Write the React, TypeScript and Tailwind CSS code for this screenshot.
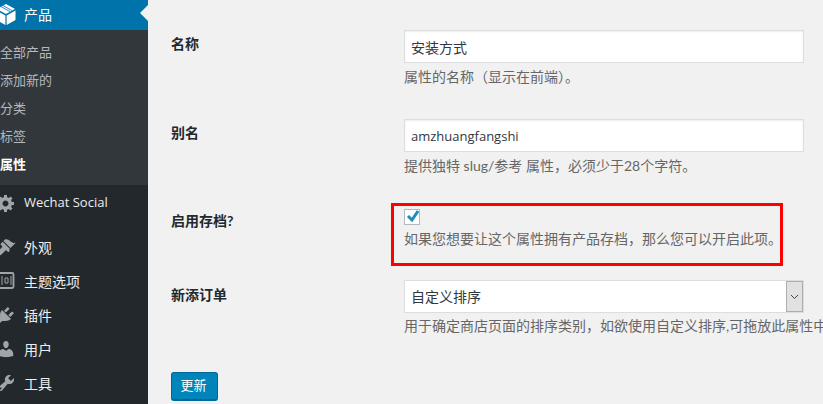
import React from 'react';

const iconClass = 'w-[20px] h-[20px] fill-[#a0a5aa]';

const CubeIcon = () => (
  <svg width="20" height="22" viewBox="0 0 20 22" className="fill-white">
    <path d="M10 1 L19 6 L10 11 L1 6 Z" />
    <path d="M5 3.6 L14 8.6 M7 2.6 L16 7.6" stroke="#0073aa" strokeWidth="0.8" fill="none" />
    <path d="M0.5 7.5 L9.4 12.5 L9.4 22 L0.5 17 Z" />
    <path d="M19.5 7.5 L10.6 12.5 L10.6 22 L19.5 17 Z" />
  </svg>
);

const GearIcon = () => (
  <svg viewBox="0 0 20 20" className={iconClass}>
    <path d="M18 12h-2.18c-.17.7-.44 1.35-.81 1.93l1.54 1.54-2.1 2.1-1.54-1.54c-.58.36-1.23.63-1.91.79V19H8v-2.18c-.68-.16-1.33-.43-1.91-.79l-1.54 1.54-2.12-2.12 1.54-1.54c-.36-.58-.63-1.23-.79-1.91H1V9.03h2.17c.16-.7.44-1.35.8-1.94L2.43 5.55l2.1-2.1 1.54 1.54c.58-.37 1.24-.64 1.93-.81V2h3v2.18c.68.16 1.33.43 1.91.79l1.54-1.54 2.12 2.12-1.54 1.54c.36.59.64 1.24.8 1.94H18V12zm-8.5 1.5c1.66 0 3-1.34 3-3s-1.34-3-3-3-3 1.34-3 3 1.34 3 3 3z" />
  </svg>
);

const BrushIcon = () => (
  <svg viewBox="0 0 20 20" className={iconClass}>
    <path d="M14.48 11.06L7.41 3.99l1.5-1.5c.5-.56 2.3-.47 3.51.32 1.21.8 1.43 1.28 2.91 2.1 1.18.64 2.45 1.26 4.45.85zm-.71.71L6.7 4.7 4.93 6.47c-.39.39-.39 1.02 0 1.41l1.06 1.06c.39.39.39 1.03 0 1.42-.6.6-2.85 2.88-3.85 3.88-.9.9-.9 2.34 0 3.24.9.9 2.34.9 3.24 0 1-1 3.28-3.25 3.88-3.85.39-.39 1.03-.39 1.42 0l1.06 1.06c.39.39 1.02.39 1.41 0z" />
  </svg>
);

const PluginIcon = () => (
  <svg viewBox="0 0 20 20" className={iconClass}>
    <path d="M13.11 4.36L9.87 7.6 8 5.73l3.24-3.24c.35-.34 1.05-.2 1.56.32.52.51.66 1.21.31 1.55zm-8 1.77l.91-1.12 9.01 9.01-1.19.84c-.71.71-2.63 1.16-3.82 1.16H6.14L4.9 17.26c-.59.59-1.54.59-2.12 0-.59-.58-.59-1.53 0-2.12l1.24-1.24v-3.88c0-1.13.4-3.19 1.09-3.89zm7.26 3.97l3.24-3.24c.34-.35 1.04-.21 1.55.31.52.51.66 1.21.31 1.55l-3.24 3.25z" />
  </svg>
);

const UserIcon = () => (
  <svg viewBox="0 0 20 20" className={iconClass}>
    <path d="M10 9.25c-2.27 0-2.73-3.44-2.73-3.44C7 4.02 7.82 2 9.97 2c2.16 0 2.98 2.02 2.71 3.81 0 0-.41 3.44-2.68 3.44zm0 2.57L12.72 10c2.39 0 4.52 2.33 4.52 4.53v2.49s-3.65 1.13-7.24 1.13c-3.65 0-7.24-1.13-7.24-1.13v-2.49c0-2.25 1.94-4.48 4.47-4.48z" />
  </svg>
);

const ToolsIcon = () => (
  <svg viewBox="0 0 20 20" className={iconClass}>
    <path d="M16.68 9.77c-1.34 1.34-3.3 1.67-4.95.99l-5.41 6.52c-.99.99-2.59.99-3.58 0s-.99-2.59 0-3.57l6.52-5.42c-.68-1.65-.35-3.61.99-4.95 1.28-1.28 3.12-1.62 4.72-1.06l-2.89 2.89 2.82 2.82 2.86-2.87c.53 1.58.18 3.39-1.08 4.67zM3.81 16.21c.4.39 1.04.39 1.43 0 .4-.4.4-1.04 0-1.43-.39-.4-1.03-.4-1.43 0-.39.39-.39 1.03 0 1.43z" />
  </svg>
);

const ThemeIcon = () => (
  <svg viewBox="0 0 20 20" className="w-[20px] h-[20px]" fill="none" stroke="#a0a5aa">
    <rect x="1.5" y="2" width="16" height="15" rx="1.5" strokeWidth="1.8" />
    <path d="M6 5 V14 M9 7 H12 V12 H9 Z M15 5 V14" strokeWidth="1" />
  </svg>
);

const subItems = ['全部产品', '添加新的', '分类', '标签'];

const menuItems = [
  { label: '外观', icon: <BrushIcon /> },
  { label: '主题选项', icon: <ThemeIcon /> },
  { label: '插件', icon: <PluginIcon /> },
  { label: '用户', icon: <UserIcon /> },
  { label: '工具', icon: <ToolsIcon /> },
];

const Sidebar = () => (
  <aside className="w-[148px] shrink-0 bg-[#23282d] text-[14px] text-[#eeeeee] overflow-hidden">
    <div className="relative flex items-center h-[30px] pb-[2px] bg-[#0073aa] text-white">
      <span className="w-[20px] -ml-[4px] mr-[8px] flex justify-center"><CubeIcon /></span>
      <span>产品</span>
      <span className="absolute right-0 top-[5px] border-y-[8px] border-r-[8px] border-y-transparent border-r-[#f1f1f1]" />
    </div>
    <ul className="bg-[#32373c] h-[155px] pt-[10px] text-[13px]">
      {subItems.map((item) => (
        <li key={item} className="h-[28px] leading-[24px] text-[#b4b9be]">{item}</li>
      ))}
      <li className="h-[28px] leading-[24px] font-bold text-white">属性</li>
    </ul>
    <div className="flex items-center h-[35px]">
      <span className="w-[20px] -ml-[4px] mr-[8px] flex justify-center"><GearIcon /></span>
      <span className="font-['Open_Sans'] text-[13px]">Wechat Social</span>
    </div>
    <div className="pt-[10px]">
      {menuItems.map((m) => (
        <div key={m.label} className="flex items-center h-[34px]">
          <span className="w-[20px] -ml-[4px] mr-[8px] flex justify-center">{m.icon}</span>
          <span>{m.label}</span>
        </div>
      ))}
    </div>
  </aside>
);

const Row = ({ label, h, children }: { label: string; h: string; children: React.ReactNode }) => (
  <div className={`flex ${h}`}>
    <label className="w-[256px] shrink-0 pl-[23px] font-bold text-[14px] leading-[20px] text-[#23282d] pt-[4px]">{label}</label>
    <div className="flex-1 min-w-0">{children}</div>
  </div>
);

const Desc = ({ children }: { children: React.ReactNode }) => (
  <p className="text-[14px] leading-[20px] text-[#666666] whitespace-nowrap">{children}</p>
);

const inputClass = 'block w-[400px] h-[33px] px-[6px] bg-white border border-[#dddddd] text-[#32373c] shadow-[inset_0_1px_2px_rgba(0,0,0,0.07)] outline-none';

export default function App() {
  return (
    <div className="relative flex w-[823px] h-[404px] overflow-hidden bg-[#f1f1f1] font-['Lato','Noto_Sans_CJK_SC',sans-serif]">
      <Sidebar />
      <main className="flex-1 min-w-0 overflow-hidden pt-[30px]">
        <Row label="名称" h="h-[89px]">
          <input className={`${inputClass} text-[14px]`} defaultValue="安装方式" />
          <div className="mt-[4px]"><Desc>属性的名称（显示在前端）。</Desc></div>
        </Row>
        <Row label="别名" h="h-[88px]">
          <input className={`${inputClass} text-[13px] font-['Open_Sans']`} defaultValue="amzhuangfangshi" />
          <div className="mt-[4px]"><Desc>提供独特 slug/参考 属性，必须少于28个字符。</Desc></div>
        </Row>
        <Row label="启用存档?" h="h-[74px]">
          <div className="h-[16px] w-[16px] relative mt-[2px] border border-[#b4b9be] bg-white mb-[4px]">
            <svg viewBox="0 0 16 16" className="absolute -top-[2px] left-0 w-[16px] h-[16px]" fill="none" stroke="#1e8cbe" strokeWidth="3">
              <path d="M3 8 L7 12 L13 3" />
            </svg>
          </div>
          <Desc>如果您想要让这个属性拥有产品存档，那么您可以开启此项。</Desc>
        </Row>
        <Row label="新添订单" h="h-[91px]">
          <div className="flex w-[400px] h-[33px] -mt-[1px] bg-white border border-[#dddddd] text-[14px] text-[#32373c]">
            <span className="flex-1 pl-[6px] leading-[31px]">自定义排序</span>
            <span className="w-[17px] bg-[#e1e1e1] border border-[#adadad] flex items-center justify-center">
              <svg width="9" height="6" viewBox="0 0 9 6" fill="none" stroke="#444444" strokeWidth="1"><path d="M1 1 L4.5 4.5 L8 1" /></svg>
            </span>
          </div>
          <div className="mt-[3px]"><Desc>用于确定商店页面的排序类别，如欲使用自定义排序,可拖放此属性中</Desc></div>
        </Row>
        <div className="pl-[23px]">
          <button className="w-[47px] h-[29px] bg-[#0085ba] border border-[#006799] border-b-2 rounded-[3px] text-white text-[13px] pr-[2px]">更新</button>
        </div>
      </main>
      <div className="absolute left-[391px] top-[203px] w-[392px] h-[63px] border-[3px] border-[#ff0000] pointer-events-none" />
    </div>
  );
}
